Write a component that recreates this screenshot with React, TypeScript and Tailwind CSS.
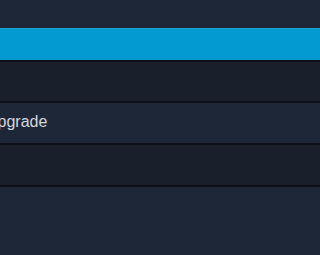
export default function App() {
  return (
    <div className="w-screen h-screen min-h-[255px] overflow-hidden flex flex-col bg-[#1e2738]" style={{ fontFamily: '"Liberation Sans", Arial, sans-serif' }}>
      <div className="h-[28px] shrink-0 bg-[#1e2738]" />
      <div className="h-[32px] shrink-0 bg-[#0399d1] border-t border-[#1ba6da]" />
      <div className="h-[41px] shrink-0 bg-[#1a202b] border-t-2 border-[#0d1117]" />
      <div className="h-[42px] shrink-0 bg-[#1e2738] border-t-2 border-[#0d1117] flex items-center pb-[2px]">
        <span className="-ml-[14px] text-[16px] font-medium text-[#d3d7dd] leading-none">Upgrade</span>
      </div>
      <div className="h-[42px] shrink-0 bg-[#1a202b] border-t-2 border-[#0d1117]" />
      <div className="flex-1 bg-[#1e2738] border-t-2 border-[#0d1117]" />
    </div>
  );
}
